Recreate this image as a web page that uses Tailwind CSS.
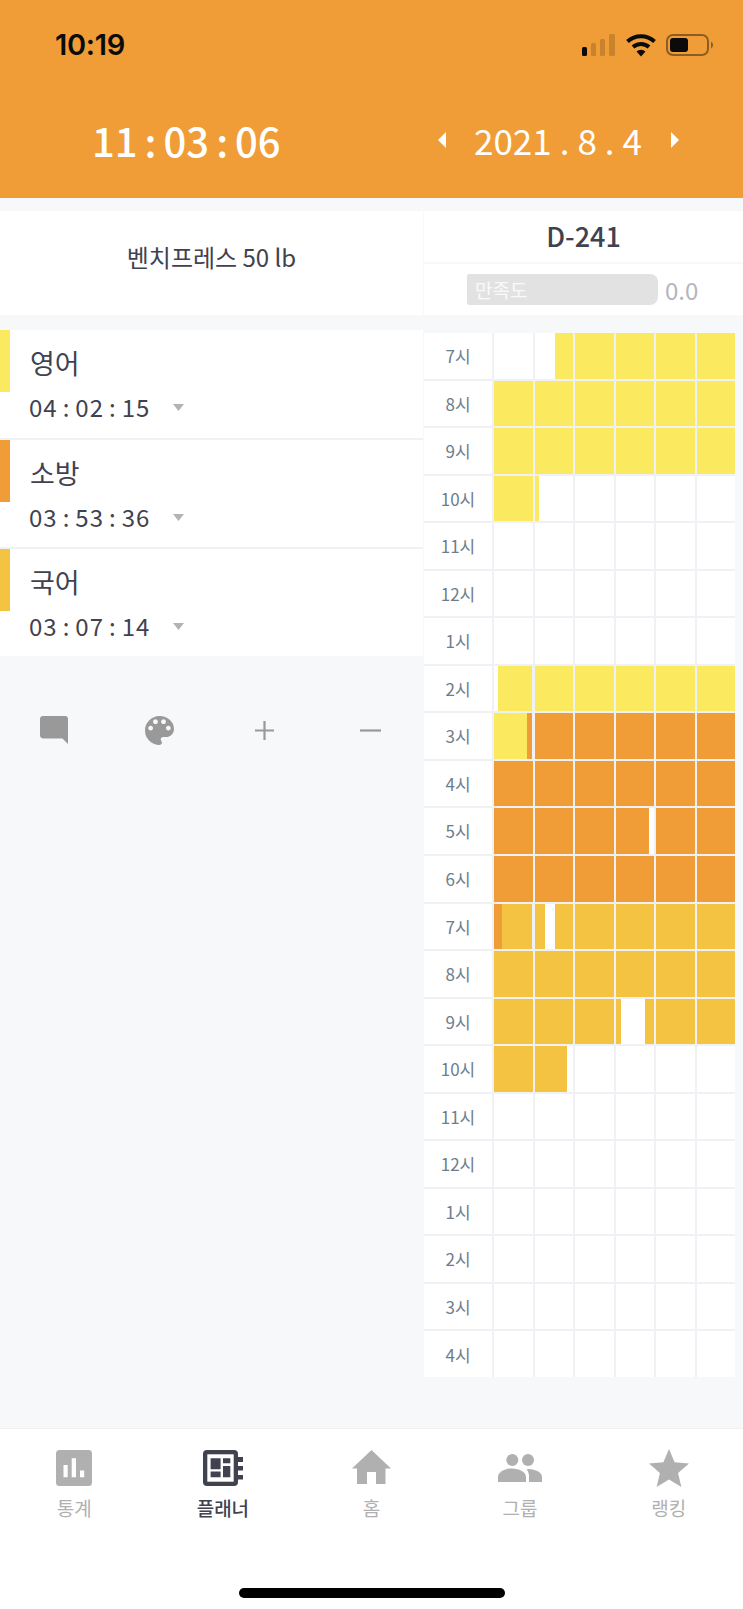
<!DOCTYPE html>
<html>
  <head>
    <meta charset="utf-8" />
    <meta name="viewport" content="width=device-width, initial-scale=1" />
    <title>Planner</title>
    <script src="https://cdn.jsdelivr.net/npm/@tailwindcss/browser@4"></script>
  </head>
  <body class="w-[743px] h-[1609px] overflow-hidden bg-[#f7f8fa] font-['Noto_Sans_CJK_KR','Noto_Sans',sans-serif] text-[#41424f]">
    <div class="flex flex-col w-full h-full">
      <!-- header -->
      <header class="h-[198px] shrink-0 bg-[#f09c37]">
        <div class="flex items-center justify-between h-[32px] pt-0 mt-[29px] pl-[55px] pr-[29px]">
          <div class="font-['Inter',sans-serif] font-semibold text-[29px] tracking-[-0.3px] text-[#0b0b0b]">10:19</div>
          <div class="flex items-center">
            <svg width="34" height="22" viewBox="0 0 34 22">
              <rect x="0" y="13" width="5" height="9" rx="1.5" fill="#0b0b0b" />
              <rect x="9" y="9" width="5" height="13" rx="1.5" fill="#c9832d" />
              <rect x="18" y="5" width="5" height="17" rx="1.5" fill="#c9832d" />
              <rect x="27" y="0" width="6" height="22" rx="1.5" fill="#c9832d" />
            </svg>
            <svg class="ml-[9px]" width="32" height="24" viewBox="0 0 32 24">
              <path d="M2.500 8.500A20 20 0 0 1 29.500 8.500" fill="none" stroke="#0b0b0b" stroke-width="4" />
              <path d="M8 14A12 12 0 0 1 24 14" fill="none" stroke="#0b0b0b" stroke-width="4" />
              <path d="M11.500 18.500a6.500 6.500 0 0 1 9 0L16 23.500z" fill="#0b0b0b" />
            </svg>
            <svg class="ml-[9px]" width="48" height="22" viewBox="0 0 48 22">
              <rect x="1" y="1" width="41" height="20" rx="6" fill="none" stroke="#8a5d20" stroke-width="2" />
              <rect x="4" y="4" width="18" height="14" rx="3" fill="#0b0b0b" />
              <path d="M45 7.500a4 4 0 0 1 0 7z" fill="#8a5d20" />
            </svg>
          </div>
        </div>
        <div class="flex items-center justify-between mt-[53px] pl-[92px] pr-[63px] text-white">
          <div class="text-[40px] leading-[52px] font-medium">11<span class="mx-[7px]">:</span>03<span class="mx-[7px]">:</span>06</div>
          <div class="flex items-center">
            <svg width="10" height="16" viewBox="0 0 10 16"><path d="M9 0v16L1 8z" fill="#fff" /></svg>
            <div class="ml-[27px] mr-[28px] text-[35px] leading-[52px]">2021<span class="mx-[8px]">.</span>8<span class="mx-[8px]">.</span>4</div>
            <svg width="10" height="16" viewBox="0 0 10 16"><path d="M1 0v16l8-8z" fill="#fff" /></svg>
          </div>
        </div>
      </header>

      <!-- main -->
      <main class="flex-1 flex pt-[13px]">
        <div class="w-[423px] shrink-0">
          <div class="h-[104px] flex items-center justify-center bg-white pb-[13px] text-[24px]">벤치프레스 50 lb</div>
          <div class="mt-[15px] bg-white">
            <div class="h-[110px] border-b-2 border-[#f0f1f5]">
              <div class="flex h-[62px]">
                <div class="w-[10px] bg-[#fbea60]"></div>
                <div class="pl-[20px] pt-[8px] text-[27px] leading-[50px]">영어</div>
              </div>
              <div class="flex items-center h-[30px] pl-[29px]">
                <span class="w-[144px] text-[24px] tracking-[1px]">04<span class="mx-[5px]">:</span>02<span class="mx-[5px]">:</span>15</span>
                <svg width="11" height="7" viewBox="0 0 11 7"><path d="M0 0h11L5.500 7z" fill="#b3b3b3" /></svg>
              </div>
            </div>
            <div class="h-[109px] border-b-2 border-[#f0f1f5]">
              <div class="flex h-[62px]">
                <div class="w-[10px] bg-[#f09c37]"></div>
                <div class="pl-[20px] pt-[8px] text-[27px] leading-[50px]">소방</div>
              </div>
              <div class="flex items-center h-[30px] pl-[29px]">
                <span class="w-[144px] text-[24px] tracking-[1px]">03<span class="mx-[5px]">:</span>53<span class="mx-[5px]">:</span>36</span>
                <svg width="11" height="7" viewBox="0 0 11 7"><path d="M0 0h11L5.500 7z" fill="#b3b3b3" /></svg>
              </div>
            </div>
            <div class="h-[107px]">
              <div class="flex h-[62px]">
                <div class="w-[10px] bg-[#f4c342]"></div>
                <div class="pl-[20px] pt-[8px] text-[27px] leading-[50px]">국어</div>
              </div>
              <div class="flex items-center h-[30px] pl-[29px]">
                <span class="w-[144px] text-[24px] tracking-[1px]">03<span class="mx-[5px]">:</span>07<span class="mx-[5px]">:</span>14</span>
                <svg width="11" height="7" viewBox="0 0 11 7"><path d="M0 0h11L5.500 7z" fill="#b3b3b3" /></svg>
              </div>
            </div>
          </div>
          <div class="grid grid-cols-4 mt-[59px] pl-[1px] h-[30px]">
            <div class="flex justify-center items-center">
              <svg width="28" height="28" viewBox="2 2 20 20"><path d="M21.990 4c0-1.100-.89-2-1.990-2H4c-1.100 0-2 .9-2 2v12c0 1.100.9 2 2 2h14l4 4-.01-18z" fill="#999" /></svg>
            </div>
            <div class="flex justify-center items-center">
              <svg width="29" height="29" viewBox="3 3 18 18"><path d="M12 3c-4.970 0-9 4.030-9 9s4.030 9 9 9c.83 0 1.500-.67 1.500-1.500 0-.39-.15-.74-.39-1.010-.23-.26-.38-.61-.38-.99 0-.83.67-1.500 1.500-1.500H16c2.760 0 5-2.240 5-5 0-4.420-4.030-8-9-8zm-5.500 9c-.83 0-1.500-.67-1.500-1.500S5.670 9 6.500 9 8 9.670 8 10.500 7.330 12 6.500 12zm3-4C8.670 8 8 7.330 8 6.500S8.670 5 9.500 5s1.500.67 1.500 1.500S10.330 8 9.500 8zm5 0c-.83 0-1.500-.67-1.500-1.500S13.670 5 14.500 5s1.500.67 1.500 1.500S15.330 8 14.500 8zm3 4c-.83 0-1.500-.67-1.500-1.500S16.670 9 17.500 9s1.500.67 1.500 1.500-.67 1.500-1.500 1.500z" fill="#999" /></svg>
            </div>
            <div class="flex justify-center items-center">
              <svg width="21" height="21" viewBox="0 0 21 21"><path d="M10.500 1v19M1 10.500h19" stroke="#999" stroke-width="2.200" fill="none" /></svg>
            </div>
            <div class="flex justify-center items-center">
              <svg width="21" height="21" viewBox="0 0 21 21"><path d="M0 10.500h21" stroke="#999" stroke-width="2.200" fill="none" /></svg>
            </div>
          </div>
        </div>

        <div class="flex-1 pl-[1px]">
          <div class="h-[51px] flex items-center justify-center bg-white text-[27px] font-medium">D-241</div>
          <div class="flex items-center h-[51px] mt-[2px] bg-white pl-[43px]">
            <div class="w-[191px] h-[31px] rounded-r-[8px] rounded-l-[2px] bg-[#e2e2e2] pl-[8px] text-[19px] leading-[31px] text-white/80">만족도</div>
            <div class="ml-[7px] text-[24px] text-[#b5b5bd]">0.0</div>
          </div>
          <div id="grid" class="grid grid-cols-[68px_repeat(6,1fr)] gap-[2px] w-[311px] mt-[18px] bg-[#f0f1f5]"></div>
        </div>
      </main>

      <!-- tab bar -->
      <nav class="h-[181px] shrink-0 bg-white border-t border-[#f0f0f2]">
        <div class="grid grid-cols-5 pt-[21px] text-[19px] leading-[26px] text-[#b0b0b0]">
          <div class="flex flex-col items-center">
            <svg width="36" height="36" viewBox="0 0 36 36">
              <rect width="36" height="36" rx="3.500" fill="#b0b0b0" />
              <path d="M7.500 15h4.200v12.300H7.500zM15.700 8.300H20v19h-4.300zM24 20.600h4.200v6.700H24z" fill="#fff" />
            </svg>
            <span class="mt-[9px]">통계</span>
          </div>
          <div class="flex flex-col items-center font-medium text-[#41424f]">
            <svg width="40" height="36" viewBox="0 0 40 36">
              <rect width="35" height="36" rx="4" fill="#41424f" />
              <rect x="4.300" y="4.300" width="26.400" height="27.400" fill="#fff" />
              <path d="M7.600 8.300h10v11h-10zM7.600 21.600h10v5.700h-10zM20 8.300h7.300v5H20zM20 16h7.300v11.300H20z" fill="#41424f" />
              <path d="M35 7h5v5h-5zM35 16h5v4.500h-5zM35 25h5v4.500h-5z" fill="#41424f" />
            </svg>
            <span class="mt-[9px]">플래너</span>
          </div>
          <div class="flex flex-col items-center">
            <svg class="mb-[2px]" width="39" height="34" viewBox="0 0 39 34"><path d="M5 34V18.500H0L19.500 0 39 18.500h-5.500V34H24V22h-9v12z" fill="#b0b0b0" /></svg>
            <span class="mt-[9px]">홈</span>
          </div>
          <div class="flex flex-col items-center">
            <svg class="my-[4px]" width="44" height="28" viewBox="0 0 44 28">
              <circle cx="14.300" cy="6" r="6" fill="#b0b0b0" />
              <circle cx="30" cy="6" r="6" fill="#b0b0b0" />
              <path d="M0 28v-5c0-5 7-8.500 14-8.500s14 3.500 14 8.500v5z" fill="#b0b0b0" />
              <path d="M30.600 15c7 .5 13.400 3 13.400 8v5H31v-5c0-3-.5-5.500-2.500-7.500z" fill="#b0b0b0" />
            </svg>
            <span class="mt-[9px]">그룹</span>
          </div>
          <div class="flex flex-col items-center">
            <svg class="-my-px" width="40" height="38" viewBox="2 2 20 19"><path d="M12 17.270L18.180 21l-1.640-7.030L22 9.240l-7.190-.61L12 2 9.190 8.630 2 9.240l5.460 4.730L5.820 21z" fill="#b0b0b0" /></svg>
            <span class="mt-[9px]">랭킹</span>
          </div>
        </div>
        <div class="w-[266px] h-[10px] mt-[67px] mx-auto rounded-full bg-black"></div>
      </nav>
    </div>

    <script>
      const Y = 'bg-[#fbea60]', O = 'bg-[#f09c37]', G = 'bg-[#f4c342]', W = 'bg-white'
      const hours = ['7', '8', '9', '10', '11', '12', '1', '2', '3', '4', '5', '6', '7', '8', '9', '10', '11', '12', '1', '2', '3', '4']

      // each row: 6 cells, a cell is one colour or a list of [colour, width %]
      const rows = [
        [W, [[W, 54], [Y, 46]], Y, Y, Y, Y],
        [Y, Y, Y, Y, Y, Y],
        [Y, Y, Y, Y, Y, Y],
        [Y, [[Y, 12], [W, 88]], W, W, W, W],
        [W, W, W, W, W, W],
        [W, W, W, W, W, W],
        [W, W, W, W, W, W],
        [[[W, 11], [Y, 89]], Y, Y, Y, Y, Y],
        [[[Y, 85], [O, 15]], O, O, O, O, O],
        [O, O, O, O, O, O],
        [O, O, O, [[O, 87], [W, 13]], O, O],
        [O, O, O, O, O, O],
        [[[O, 21], [G, 79]], [[G, 26], [W, 27], [G, 47]], G, G, G, G],
        [G, G, G, G, G, G],
        [G, G, G, [[G, 13], [W, 63], [G, 24]], G, G],
        [G, [[G, 84], [W, 16]], W, W, W, W],
        [W, W, W, W, W, W],
        [W, W, W, W, W, W],
        [W, W, W, W, W, W],
        [W, W, W, W, W, W],
        [W, W, W, W, W, W],
        [W, W, W, W, W, W]
      ]

      document.getElementById('grid').innerHTML = rows.map((cells, i) => {
        const label = `<div class="flex items-center justify-center h-[45.55px] bg-white text-[17px] text-[#6f7d8a]">${hours[i]}시</div>`
        return label + cells.map(cell => {
          if (typeof cell === 'string') return `<div class="${cell}"></div>`
          const parts = cell.map(p => `<div class="${p[0]}" style="width:${p[1]}%"></div>`).join('')
          return `<div class="flex">${parts}</div>`
        }).join('')
      }).join('')
    </script>
  </body>
</html>
